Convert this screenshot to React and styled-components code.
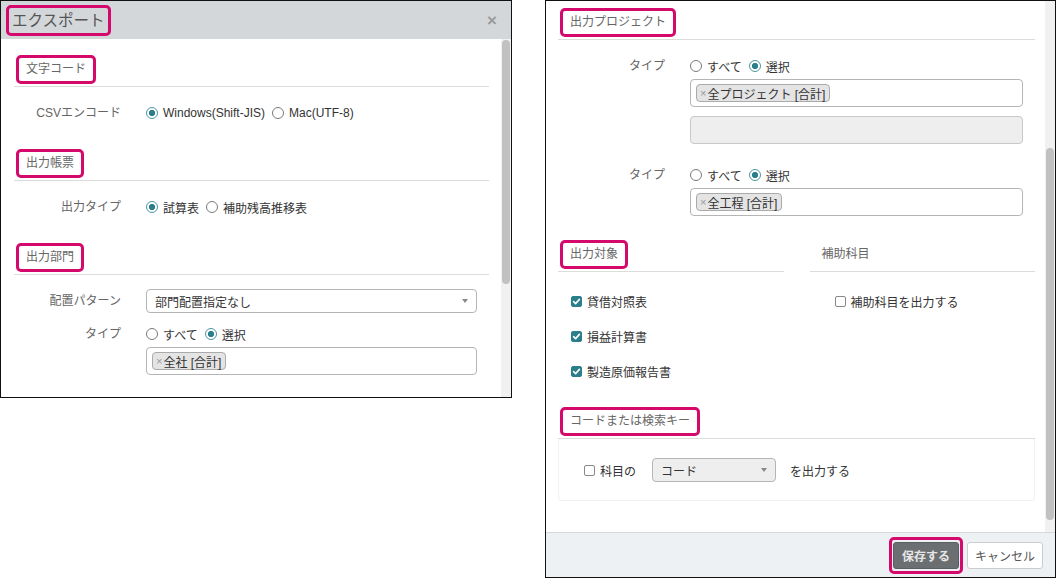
import React from 'react';
import styled, { createGlobalStyle, css } from 'styled-components';

const PINK = '#d5086c';
const TEAL = '#2a7f8b';

const Global = createGlobalStyle`
  html, body { margin: 0; padding: 0; background: #fff; }
  body {
    font-family: "Liberation Sans", "Noto Sans CJK JP", sans-serif;
    font-size: 12px;
    color: #333;
  }
  * { box-sizing: border-box; }
`;

const Page = styled.div`
  display: flex;
  align-items: flex-start;
  gap: 33px;
  width: 1056px;
  height: 578px;
  overflow: hidden;
`;

const Frame = styled.div`
  width: ${p => p.$w}px;
  height: ${p => p.$h}px;
  border: 1px solid #111;
  display: flex;
  flex-direction: column;
  overflow: hidden;
  background: #fff;
`;

const DialogHeader = styled.div`
  height: 38px;
  flex: none;
  background: #d4d7da;
  display: flex;
  align-items: center;
  justify-content: space-between;
  padding: 0 14px 0 5px;
`;

const Title = styled.span`
  border: 3px solid ${PINK};
  border-radius: 5px;
  padding: 0 3px;
  line-height: 25px;
  font-size: 15.5px;
  color: #555;
`;

const Close = styled.span`
  color: #9a9a9a;
  font-size: 17px;
  font-weight: bold;
  line-height: 1;
`;

const BodyWrap = styled.div`
  flex: 1;
  min-height: 0;
  display: flex;
`;

const Content = styled.div`
  flex: 1;
  min-width: 0;
  overflow: hidden;
  display: flex;
  flex-direction: column;
  gap: 24px;
  padding: ${p => p.$pt}px ${p => p.$pr}px 0 ${p => p.$pl}px;
`;

const ScrollTrack = styled.div`
  flex: none;
  width: 10px;
  background: #f1f1f1;
  display: flex;
  flex-direction: column;
  align-items: center;
`;

const Thumb = styled.div`
  width: 8px;
  margin-top: ${p => p.$top}px;
  height: ${p => p.$h}px;
  background: #c1c1c1;
  border-radius: 4px;
`;

const Section = styled.section`
  display: flex;
  flex-direction: column;
`;

const HeadLabel = styled.span`
  align-self: flex-start;
  margin-left: 2px;
  border: 3px solid ${p => (p.$mark ? PINK : 'transparent')};
  border-radius: 5px;
  padding: 0 7px;
  line-height: 23px;
  font-size: 12px;
  color: #666;
  white-space: nowrap;
`;

const Rule = styled.div`
  height: 1px;
  background: #dcdcdc;
  margin-top: 2px;
`;

const Fields = styled.div`
  display: flex;
  flex-direction: column;
  gap: ${p => p.$gap || 0}px;
  padding-top: ${p => p.$pt ?? 14}px;
`;

const FormRow = styled.div`
  display: grid;
  grid-template-columns: 107px 1fr;
  column-gap: 25px;
  padding-right: 12px;
  align-items: start;
`;

const Label = styled.div`
  text-align: right;
  color: #666;
  line-height: 24px;
  white-space: nowrap;
`;

const Controls = styled.div`
  display: flex;
  flex-direction: column;
  min-width: 0;
`;

const RadioGroup = styled.div`
  display: flex;
  align-items: center;
  height: 24px;
`;

const Option = styled.label`
  display: inline-flex;
  align-items: center;
  margin-right: 7px;
  color: #333;
  white-space: nowrap;
`;

const Radio = styled.span`
  width: 12px;
  height: 12px;
  border-radius: 50%;
  margin-right: 5px;
  border: 1px solid ${p => (p.$on ? '#4b97a2' : '#7a7a7a')};
  background: ${p => (p.$on ? `radial-gradient(circle, ${TEAL} 0 2.8px, #fff 3.4px)` : '#fff')};
`;

const Select = styled.div`
  height: 24px;
  border: 1px solid #b5b5b5;
  border-radius: 4px;
  background: ${p => (p.$gray ? '#eee' : '#fff')};
  display: flex;
  align-items: center;
  justify-content: space-between;
  padding: 0 8px;
  color: #333;
  ${p => p.$w && css`width: ${p.$w}px;`}
`;

const Caret = styled.span`
  width: 0;
  height: 0;
  border-left: 3.5px solid transparent;
  border-right: 3.5px solid transparent;
  border-top: 4px solid #888;
`;

const TagBox = styled.div`
  height: 28px;
  margin-top: 1px;
  border: 1px solid #b5b5b5;
  border-radius: 4px;
  background: #fff;
  display: flex;
  align-items: center;
  padding: 0 5px;
`;

const Tag = styled.span`
  display: inline-flex;
  align-items: center;
  height: 18px;
  border: 1px solid #aaa;
  background: #e4e4e4;
  border-radius: 4px;
  padding: 0 4px 0 3px;
  color: #333;
  white-space: nowrap;
`;

const TagX = styled.span`
  color: #999;
  font-size: 11px;
  margin-right: 1px;
`;

const DisabledBox = styled.div`
  height: 28px;
  margin-top: 9px;
  border: 1px solid #c8c8c8;
  border-radius: 4px;
  background: #eee;
`;

const TwoCols = styled.div`
  display: grid;
  grid-template-columns: 1fr 1fr;
  column-gap: 26px;
`;

const CheckList = styled.div`
  display: flex;
  flex-direction: column;
  gap: 11px;
  padding: 17px 0 0 ${p => p.$indent}px;
`;

const CheckItem = styled.label`
  display: flex;
  align-items: center;
  height: 24px;
  color: #333;
  white-space: nowrap;
`;

const Box = styled.span`
  width: 11px;
  height: 11px;
  margin-right: 5px;
  border-radius: 2px;
  display: inline-flex;
  align-items: center;
  justify-content: center;
  flex: none;
  ${p => (p.$on
    ? css`background: ${TEAL}; border: 1px solid ${TEAL};`
    : css`background: #fff; border: 1px solid #888;`)}
`;

const Well = styled.div`
  border: 1px solid #f1f1f1;
  border-top: none;
  border-radius: 0 0 4px 4px;
  padding: 19px 25px 18px;
`;

const InlineRow = styled.div`
  display: flex;
  align-items: center;
  height: 24px;
  white-space: nowrap;
`;

const Gap = styled.span`
  display: inline-block;
  width: ${p => p.$w}px;
`;

const Footer = styled.div`
  flex: none;
  height: 45px;
  border-top: 1px solid #d6d9dc;
  background: #eef1f4;
  display: flex;
  align-items: center;
  justify-content: flex-end;
  padding-right: 12px;
`;

const SaveMark = styled.div`
  border: 3px solid ${PINK};
  border-radius: 5px;
  padding: 2px 1px;
  display: flex;
`;

const SaveButton = styled.button`
  width: 66px;
  height: 27px;
  border: 1px solid #5c5f62;
  border-radius: 3px;
  background: #6c6f72;
  color: #e6e6e6;
  font: bold 12px "Liberation Sans", "Noto Sans CJK JP", sans-serif;
  padding: 0;
`;

const CancelButton = styled.button`
  margin-left: 4px;
  width: 76px;
  height: 27px;
  border: 1px solid #ccc;
  border-radius: 3px;
  background: #fff;
  color: #555;
  font: 12px "Liberation Sans", "Noto Sans CJK JP", sans-serif;
  padding: 0;
`;

const CheckMark = () => (
  <svg width="9" height="9" viewBox="0 0 9 9">
    <path d="M1.6 4.6 L3.6 6.6 L7.4 2.4" fill="none" stroke="#fff" strokeWidth="1.6" strokeLinecap="round" strokeLinejoin="round" />
  </svg>
);

const Check = ({ on, children }) => (
  <CheckItem>
    <Box $on={on}>{on && <CheckMark />}</Box>
    {children}
  </CheckItem>
);

const Radios = ({ options, selected }) => (
  <RadioGroup>
    {options.map(o => (
      <Option key={o}>
        <Radio $on={o === selected} />
        {o}
      </Option>
    ))}
  </RadioGroup>
);

const Heading = ({ mark, children }) => (
  <>
    <HeadLabel $mark={mark}>{children}</HeadLabel>
    <Rule />
  </>
);

const TagField = ({ children }) => (
  <TagBox>
    <Tag><TagX>×</TagX>{children}</Tag>
  </TagBox>
);

export default function App() {
  return (
    <>
      <Global />
      <Page>
        <Frame $w={512} $h={398}>
          <DialogHeader>
            <Title>エクスポート</Title>
            <Close>×</Close>
          </DialogHeader>
          <BodyWrap>
            <Content $pt={16} $pr={12} $pl={13}>
              <Section>
                <Heading mark>文字コード</Heading>
                <Fields>
                  <FormRow>
                    <Label>CSVエンコード</Label>
                    <Radios options={['Windows(Shift-JIS)', 'Mac(UTF-8)']} selected="Windows(Shift-JIS)" />
                  </FormRow>
                </Fields>
              </Section>
              <Section>
                <Heading mark>出力帳票</Heading>
                <Fields>
                  <FormRow>
                    <Label>出力タイプ</Label>
                    <Radios options={['試算表', '補助残高推移表']} selected="試算表" />
                  </FormRow>
                </Fields>
              </Section>
              <Section>
                <Heading mark>出力部門</Heading>
                <Fields $gap={9}>
                  <FormRow>
                    <Label>配置パターン</Label>
                    <Select>部門配置指定なし<Caret /></Select>
                  </FormRow>
                  <FormRow>
                    <Label>タイプ</Label>
                    <Controls>
                      <Radios options={['すべて', '選択']} selected="選択" />
                      <TagField>全社 [合計]</TagField>
                    </Controls>
                  </FormRow>
                </Fields>
              </Section>
            </Content>
            <ScrollTrack>
              <Thumb $top={1} $h={244} />
            </ScrollTrack>
          </BodyWrap>
        </Frame>

        <Frame $w={511} $h={578}>
          <BodyWrap>
            <Content $pt={7} $pr={10} $pl={12}>
              <Section>
                <Heading mark>出力プロジェクト</Heading>
                <Fields $gap={19}>
                  <FormRow>
                    <Label>タイプ</Label>
                    <Controls>
                      <Radios options={['すべて', '選択']} selected="選択" />
                      <TagField>全プロジェクト [合計]</TagField>
                      <DisabledBox />
                    </Controls>
                  </FormRow>
                  <FormRow>
                    <Label>タイプ</Label>
                    <Controls>
                      <Radios options={['すべて', '選択']} selected="選択" />
                      <TagField>全工程 [合計]</TagField>
                    </Controls>
                  </FormRow>
                </Fields>
              </Section>
              <TwoCols>
                <Section>
                  <Heading mark>出力対象</Heading>
                  <CheckList $indent={13}>
                    <Check on>貸借対照表</Check>
                    <Check on>損益計算書</Check>
                    <Check on>製造原価報告書</Check>
                  </CheckList>
                </Section>
                <Section>
                  <Heading>補助科目</Heading>
                  <CheckList $indent={25}>
                    <Check>補助科目を出力する</Check>
                  </CheckList>
                </Section>
              </TwoCols>
              <Section>
                <Heading mark>コードまたは検索キー</Heading>
                <Well>
                  <InlineRow>
                    <Check>科目の</Check>
                    <Gap $w={16} />
                    <Select $gray $w={124}>コード<Caret /></Select>
                    <Gap $w={14} />
                    を出力する
                  </InlineRow>
                </Well>
              </Section>
            </Content>
            <ScrollTrack>
              <Thumb $top={147} $h={372} />
            </ScrollTrack>
          </BodyWrap>
          <Footer>
            <SaveMark>
              <SaveButton>保存する</SaveButton>
            </SaveMark>
            <CancelButton>キャンセル</CancelButton>
          </Footer>
        </Frame>
      </Page>
    </>
  );
}
